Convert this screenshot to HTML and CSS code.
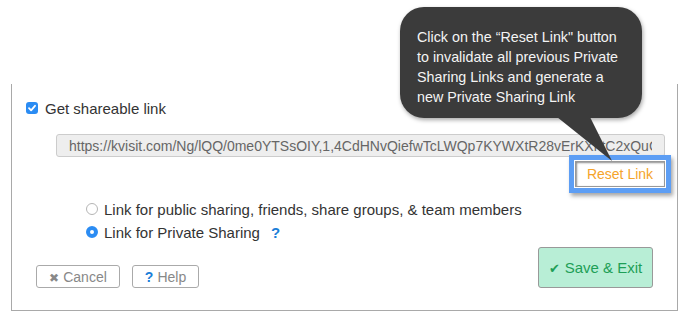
FILE: index.html
```html
<!DOCTYPE html>
<html lang="en">
<head>
    <meta charset="UTF-8" />
    <title>Share Link</title>
    <link rel="stylesheet" href="styles.css">
</head>
<body>
    <div class="share-panel">
        <label class="check-row">
            <span class="check-box">
                <svg width="12" height="12" viewBox="0 0 12 12"><path d="M3 6.2 L5.1 8.3 L9 3.8" fill="none" stroke="#fff" stroke-width="1.8" stroke-linecap="round" stroke-linejoin="round"/></svg>
            </span>
            <span>Get shareable link</span>
        </label>

        <div class="link-input"><span class="link-text">https://kvisit.com/Ng/lQQ/0me0YTSsOIY,1,4CdHNvQiefwTcLWQp7KYWXtR28vErKXhtC2xQuC</span></div>

        <div class="reset-row">
            <button class="reset-button">Reset Link</button>
        </div>

        <div class="radio-list">
            <label class="radio-row">
                <span class="radio"></span>
                <span>Link for public sharing, friends, share groups, &amp; team members</span>
            </label>
            <label class="radio-row">
                <span class="radio radio-on"></span>
                <span>Link for Private Sharing</span>
                <span class="qmark">?</span>
            </label>
        </div>

        <div class="footer-row">
            <div class="left-buttons">
                <button class="plain-button cancel-button"><span class="x-icon">&#x2716;</span>Cancel</button>
                <button class="plain-button help-button"><span class="q-icon">?</span>Help</button>
            </div>
            <button class="save-button"><span class="ok-icon">&#x2714;</span>Save &amp; Exit</button>
        </div>
    </div>

    <!-- tutorial callout over the panel -->
    <div class="callout">
        <p>Click on the “Reset Link" button to invalidate all previous Private Sharing Links and generate a new Private Sharing Link</p>
        <svg class="callout-tail" width="70" height="50" viewBox="0 0 70 50"><polygon points="0,0 33,0 55,44" fill="#3b3b3b"/></svg>
    </div>
</body>
</html>
```

FILE: styles.css
```css
body {
    margin: 0;
    background: #fff;
    font-family: 'Liberation Sans', Arial, sans-serif;
    color: #333;
    position: relative;
    height: 321px;
    overflow: hidden;
}
.share-panel {
    margin: 84px 10px 0 11px;
    height: 227px;
    border: 1px solid #a9a9a9;
    border-top: none;
    box-sizing: border-box;
    padding: 17px 12px 0 14px;
    display: flex;
    flex-direction: column;
}
.check-row {
    display: flex;
    align-items: center;
    gap: 7px;
    font-size: 15px;
    height: 14px;
}
.check-box {
    width: 12px;
    height: 12px;
    border-radius: 3px;
    background: #2b8cf3;
    display: flex;
}
.link-input {
    margin: 19px 0 0 30px;
    height: 23px;
    line-height: 22px;
    box-sizing: border-box;
    border: 1px solid #ccc;
    border-radius: 3px;
    background: #eee;
    color: #666;
    font-size: 14px;
    padding: 0 12px;
    white-space: nowrap;
    overflow: hidden;
}
.link-text {
    display: block;
    overflow: hidden;
}
.reset-row {
    display: flex;
    justify-content: flex-end;
    margin-top: 4px;
}
.reset-button {
    width: 90px;
    height: 26px;
    background: #fff;
    border: 1px solid #999;
    box-shadow: inset 1px 1px 2px rgba(0,0,0,0.45), 0 0 0 1px #fff, 0 0 0 6px #5d9ef4, 2px 3px 4px 6px rgba(0,0,0,0.35);
    color: #f5a42a;
    font-family: 'Liberation Sans', Arial, sans-serif;
    font-size: 14px;
    padding: 0;
}
.radio-list {
    margin: 15px 0 0 60px;
    display: flex;
    flex-direction: column;
    gap: 9px;
    font-size: 15px;
}
.radio-row {
    display: flex;
    align-items: center;
    gap: 6px;
    height: 14px;
}
.radio {
    width: 12px;
    height: 12px;
    border-radius: 50%;
    border: 1px solid #b5b5b5;
    box-sizing: border-box;
}
.radio-on {
    border: 4px solid #2b8cf3;
    background: #fff;
}
.qmark {
    color: #1a7ed8;
    font-weight: 700;
    margin-left: 5px;
}
.footer-row {
    margin-top: auto;
    margin-bottom: 22px;
    display: flex;
    justify-content: space-between;
    align-items: flex-end;
    padding: 0 12px 0 10px;
}
.left-buttons {
    display: flex;
    gap: 12px;
}
.plain-button {
    height: 23px;
    padding: 0;
    background: #fff;
    border: 1px solid #aaa;
    border-radius: 3px;
    color: #888;
    font-family: 'Liberation Sans', Arial, sans-serif;
    font-size: 14px;
    white-space: nowrap;
}
.cancel-button { width: 84px; }
.help-button { width: 67px; }
.x-icon { font-size: 12px; margin-right: 4px; color: #888; }
.q-icon { color: #1a7ed8; font-weight: 700; margin-right: 4px; }
.save-button {
    width: 115px;
    height: 41px;
    background: #b8eed6;
    border: 1px solid #999;
    border-radius: 3px;
    color: #1e9f57;
    font-family: 'Liberation Sans', Arial, sans-serif;
    font-size: 15px;
    white-space: nowrap;
}
.ok-icon { font-size: 13px; margin-right: 5px; }
.callout {
    position: absolute;
    left: 400px;
    top: 7px;
    width: 242px;
    height: 111px;
    box-sizing: border-box;
    background: #3b3b3b;
    border-radius: 24px;
    box-shadow: 1px 2px 4px rgba(0,0,0,0.35);
    padding: 20px 0 0 17px;
}
.callout p {
    margin: 0;
    width: 208px;
    color: #f4f4f4;
    font-size: 14.3px;
    line-height: 20px;
}
.callout-tail {
    position: absolute;
    left: 157px;
    top: 110px;
}
```
